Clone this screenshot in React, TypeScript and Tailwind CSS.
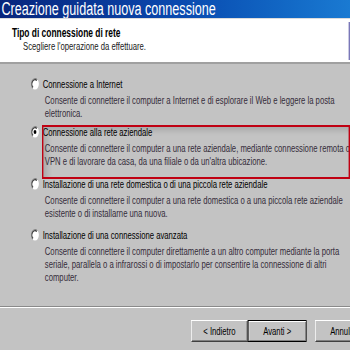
import React from "react";

const Radio = ({ checked }: { checked?: boolean }) => (
  <svg width="12" height="12" viewBox="0 0 12 12" className="shrink-0">
    <circle cx="6" cy="6" r="5.5" fill="#ffffff" />
    <path d="M9.2 1.8 A5 5 0 0 0 2.8 10.2" stroke="#808080" strokeWidth="1.2" fill="none" />
    <path d="M8.5 2.6 A4 4 0 0 0 3.3 9.2" stroke="#303030" strokeWidth="1.2" fill="none" />
    {checked && <circle cx="6" cy="6" r="2" fill="#000000" />}
  </svg>
);

type Opt = { label: string; lines: string[]; checked?: boolean; mt: string };

const options: Opt[] = [
  {
    label: "Connessione a Internet",
    lines: [
      "Consente di connettere il computer a Internet e di esplorare il Web e leggere la posta",
      "elettronica.",
    ],
    mt: "mt-0",
  },
  {
    label: "Connessione alla rete aziendale",
    lines: [
      "Consente di connettere il computer a una rete aziendale, mediante connessione remota o",
      "VPN e di lavorare da casa, da una filiale o da un'altra ubicazione.",
    ],
    checked: true,
    mt: "mt-[5px]",
  },
  {
    label: "Installazione di una rete domestica o di una piccola rete aziendale",
    lines: [
      "Consente di connettere il computer a una rete domestica o a una piccola rete aziendale",
      "esistente o di installarne una nuova.",
    ],
    mt: "mt-[9px]",
  },
  {
    label: "Installazione di una connessione avanzata",
    lines: [
      "Consente di connettere il computer direttamente a un altro computer mediante la porta",
      "seriale, parallela o a infrarossi o di impostarlo per consentire la connessione di altri",
      "computer.",
    ],
    mt: "mt-[8px]",
  },
];

export default function App() {
  return (
    <div className="w-[350px] h-[350px] overflow-hidden bg-[#c3c3c3]">
      <div
        className="w-[500px] h-[350px] origin-top-left scale-x-[0.7] flex flex-col text-black"
        style={{ fontFamily: '"Liberation Sans", Arial, sans-serif' }}
      >
        {/* Title bar */}
        <div className="h-[18px] shrink-0 bg-gradient-to-r from-[#08257c] via-[#0a48ae] to-[#1a7ad2] flex items-center pl-[2px]">
          <span className="text-white text-[18px] leading-[18px] whitespace-nowrap">
            Creazione guidata nuova connessione
          </span>
        </div>
        <div className="h-[1px] shrink-0 bg-[#dcdcdc]" />
        {/* Header */}
        <div className="h-[43px] shrink-0 bg-white flex justify-between">
          <div className="pt-[7px] pl-[17px]">
            <div className="text-[12px] leading-[14px] font-bold whitespace-nowrap">
              Tipo di connessione di rete
            </div>
            <div className="text-[11px] leading-[13px] pl-[16px] whitespace-nowrap text-[#202020]">
              Scegliere l'operazione da effettuare.
            </div>
          </div>
          <div className="mt-[3px] w-[2px] h-[38px] bg-[#7a78b8]" />
        </div>
        <div className="h-[2px] shrink-0 bg-[#a0a0a0]" />
        {/* Content */}
        <div className="relative h-[242px] shrink-0 pt-[13px] pl-[44px]">
          {options.map((o) => (
            <div key={o.label} className={o.mt}>
              <div className="flex items-center gap-[5px] h-[14px]">
                <Radio checked={o.checked} />
                <span className="text-[11px] leading-[14px] whitespace-nowrap">{o.label}</span>
              </div>
              <div className="mt-[3px] pl-[20px] text-[11px] leading-[13px] text-[#352c3a]">
                {o.lines.map((l) => (
                  <div key={l} className="whitespace-nowrap">
                    {l}
                  </div>
                ))}
              </div>
            </div>
          ))}
          <div className="absolute left-[60px] top-[61px] w-[440px] h-[54px] border-2 border-[#c00012] shadow-[inset_6px_4px_6px_rgba(0,0,0,0.12)]" />
        </div>
        <div className="h-[1px] shrink-0 bg-[#8a8a8a]" />
        <div className="h-[1px] shrink-0 bg-white" />
        {/* Footer */}
        <div className="pt-[12px] pl-[273px] flex">
          <div className="shrink-0 w-[81px] h-[22px] flex items-center justify-center text-[11px] border-t border-l border-white border-b border-r border-b-[#404040] border-r-[#404040] shadow-[inset_-1px_-1px_0_#808080]">
            &lt; Indietro
          </div>
          <div className="shrink-0 w-[84px] h-[22px] flex items-center justify-center text-[11px] border border-black shadow-[inset_1px_1px_0_#ffffff,inset_-1px_-1px_0_#808080]">
            Avanti &gt;
          </div>
          <div className="shrink-0 ml-[12px] w-[80px] h-[22px] flex items-center justify-center text-[11px] border-t border-l border-white border-b border-r border-b-[#404040] border-r-[#404040] shadow-[inset_-1px_-1px_0_#808080]">
            Annulla
          </div>
        </div>
      </div>
    </div>
  );
}
